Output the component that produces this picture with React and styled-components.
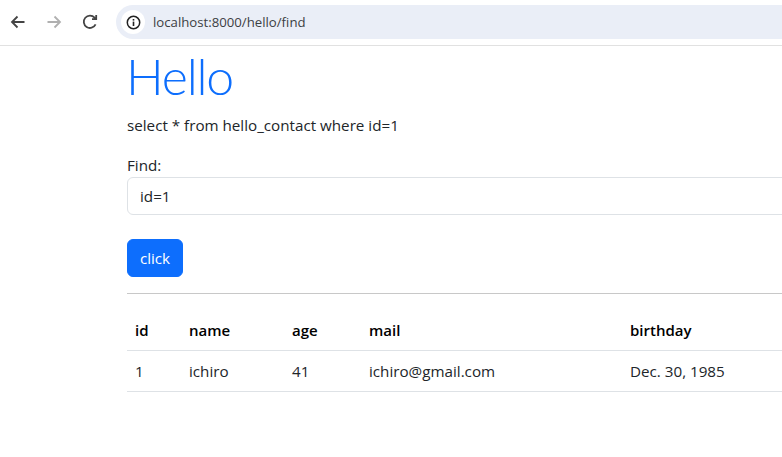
import React from "react";
import styled, { createGlobalStyle } from "styled-components";

const Global = createGlobalStyle`
  html, body { margin: 0; padding: 0; background: #fff; overflow: hidden; }
  * { box-sizing: border-box; }
`;
const Page = styled.div`
  width: 782px; height: 457px; overflow: hidden;
  font-family: "Open Sans", "Noto Sans", sans-serif; color: #212529; font-size: 15.2px;
`;
const Toolbar = styled.header`
  height: 46px; border-bottom: 1px solid #e1e1e1; padding: 5px 0 0 0;
  display: flex; align-items: flex-start;
`;
const NavButtons = styled.nav`
  width: 116px; height: 34px; display: flex; align-items: center; padding-left: 8px; gap: 16px; flex: none;
`;
const NavIcon = styled.svg`
  width: 20px; height: 20px; flex: none; display: block;
  fill: none; stroke: ${p => p.$tone}; stroke-width: 1.8;
`;
const UrlBar = styled.div`
  flex: 1; height: 34px; background: #eaeef7; border-radius: 17px 0 0 17px;
  display: flex; align-items: center; padding-left: 5px; gap: 8px;
`;
const InfoChip = styled.span`
  width: 24px; height: 24px; border-radius: 50%; background: #fff;
  display: flex; align-items: center; justify-content: center;
`;
const UrlText = styled.span`
  font-size: 13.2px; color: #3c4043;
`;
const Content = styled.main`
  width: 700px; margin-left: 127px;
`;
const Title = styled.h1`
  margin: 0; font-family: "Lato", sans-serif; font-size: 50px; font-weight: 300; color: #0d6efd;
  letter-spacing: -1.2px; text-indent: -1px; line-height: 61px; height: 64px;
`;
const Message = styled.p`
  margin: 3px 0 0; line-height: 24px; height: 24px;
`;
const Label = styled.label`
  display: block; margin-top: 17px; line-height: 22px; height: 23px;
`;
const Input = styled.input`
  display: block; width: 100%; height: 38px; padding: 0 12px; border: 1px solid #dee2e6;
  border-radius: 6px; font: inherit; color: #212529; background: #fff; outline: none;
`;
const Button = styled.button`
  display: block; margin-top: 24px; width: 56px; height: 38px; border: 1px solid #0d6efd; border-radius: 6px;
  background: #0d6efd; color: #fff; font: inherit; padding: 0;
`;
const Rule = styled.hr`
  margin: 16px 0 0; border: 0; border-top: 1px solid #c8c8c8; height: 0;
`;
const Table = styled.table`
  margin-top: 16px; border-collapse: collapse; table-layout: fixed; width: 700px;
`;
const Cell = styled.td`
  padding: 0 8px; height: 41px; border-bottom: 1px solid #dee2e6; text-align: left; color: #212529;
  width: ${p => p.$w}px;
`;
const Head = styled(Cell).attrs({ as: "th" })`
  font-weight: 600; color: #000; height: 40px; font-size: 15px;
`;

const cols = [
  ["id", "1", 54],
  ["name", "ichiro", 103],
  ["age", "41", 77],
  ["mail", "ichiro@gmail.com", 261],
  ["birthday", "Dec. 30, 1985", 205],
];

export default function App() {
  return (
    <Page>
      <Global />
      <Toolbar>
        <NavButtons>
          <NavIcon viewBox="0 0 20 20" $tone="#444"><path d="M16.5 10H4M9.5 4.5 4 10l5.5 5.5" /></NavIcon>
          <NavIcon viewBox="0 0 20 20" $tone="#b0b0b0"><path d="M3.5 10H16M10.5 4.5 16 10l-5.5 5.5" /></NavIcon>
          <NavIcon viewBox="0 0 20 20" $tone="#444"><path d="M15.6 12.4A6.2 6.2 0 1 1 14.6 5.6L16.2 7.2M16.2 3v4.2H12" /></NavIcon>
        </NavButtons>
        <UrlBar>
          <InfoChip>
            <svg width="15" height="15" viewBox="0 0 15 15">
              <circle cx="7.5" cy="7.5" r="6.2" fill="none" stroke="#222" strokeWidth="1.5" />
              <rect x="6.7" y="6.6" width="1.6" height="4.4" fill="#222" />
              <rect x="6.7" y="4" width="1.6" height="1.6" fill="#222" />
            </svg>
          </InfoChip>
          <UrlText>localhost:8000/hello/find</UrlText>
        </UrlBar>
      </Toolbar>
      <Content>
        <Title>Hello</Title>
        <Message>select * from hello_contact where id=1</Message>
        <Label>Find:</Label>
        <Input defaultValue="id=1" />
        <Button>click</Button>
        <Rule />
        <Table>
          <thead>
            <tr>{cols.map(c => <Head key={c[0]} $w={c[2]}>{c[0]}</Head>)}</tr>
          </thead>
          <tbody>
            <tr>{cols.map(c => <Cell key={c[0]} $w={c[2]}>{c[1]}</Cell>)}</tr>
          </tbody>
        </Table>
      </Content>
    </Page>
  );
}
